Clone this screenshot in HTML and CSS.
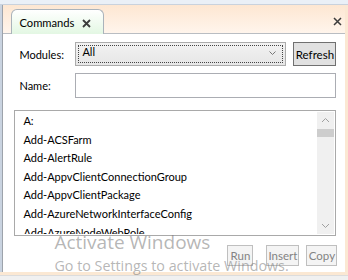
FILE: index.html
```html
<!DOCTYPE html>
<html>
<head>
<meta charset="utf-8">
<link rel="stylesheet" href="styles.css">
</head>
<body>
<div class="window">
  <div class="topband"></div>
  <div class="middle">
    <div class="rail"></div>
    <div class="pane">
      <div class="header">
        <div class="tab">
          <span class="tab-title">Commands</span>
          <svg class="tab-x" width="9" height="9" viewBox="0 0 9 9"><path d="M1 1L8 8M8 1L1 8" stroke="#3c3c3c" stroke-width="1.8"/></svg>
        </div>
        <svg class="pane-x" width="9" height="9" viewBox="0 0 9 9"><path d="M1 1L8 8M8 1L1 8" stroke="#3c3c3c" stroke-width="1.5"/></svg>
      </div>
      <div class="content">
        <div class="row">
          <label class="lbl">Modules:</label>
          <div class="combo">
            <div class="focus"><span>All</span>
              <svg class="chev" width="7" height="5" viewBox="0 0 7 5"><path d="M0.5 0.5L3.5 3.5L6.5 0.5" stroke="#777" fill="none" stroke-width="1"/></svg>
            </div>
          </div>
          <button class="btn refresh">Refresh</button>
        </div>
        <div class="row">
          <label class="lbl">Name:</label>
          <div class="textbox"></div>
        </div>
        <div class="list">
          <ul class="items">
            <li>A:</li>
            <li>Add-ACSFarm</li>
            <li>Add-AlertRule</li>
            <li>Add-AppvClientConnectionGroup</li>
            <li>Add-AppvClientPackage</li>
            <li>Add-AzureNetworkInterfaceConfig</li>
            <li>Add-AzureNodeWebRole</li>
          </ul>
          <div class="scroll">
            <svg class="arrow" width="17" height="17" viewBox="0 0 17 17"><path d="M5 10L8.5 6.5L12 10" stroke="#a0a0a0" fill="none"/></svg>
            <div class="track"><div class="thumb"></div></div>
            <svg class="arrow" width="17" height="17" viewBox="0 0 17 17"><path d="M5 7L8.5 10.5L12 7" stroke="#a0a0a0" fill="none"/></svg>
          </div>
        </div>
        <div class="actions">
          <button class="btn dis run">Run</button>
          <button class="btn dis insert">Insert</button>
          <button class="btn dis copy">Copy</button>
        </div>
        <div class="watermark">
          <div class="wm1">Activate Windows</div>
          <div class="wm2">Go to Settings to activate Windows.</div>
        </div>
      </div>
    </div>
    <div class="rstrip"></div>
  </div>
  <div class="bpeach"></div>
  <div class="bgray"></div>
</div>
</body>
</html>
```
FILE: styles.css
```css
* { box-sizing: border-box; }
html, body { margin: 0; padding: 0; }
body {
  width: 348px; height: 280px; overflow: hidden;
  font-family: Lato, "Open Sans", sans-serif;
  font-size: 11px; color: #000; background: #f0f0f0;
}
.window { width: 348px; height: 280px; display: flex; flex-direction: column; }
.topband { height: 5px; background: #eaf0f7; border-bottom: 1px solid #c9d2dd; }
.middle { display: flex; height: 267px; }
.rail { width: 4px; background: linear-gradient(to right, #c9d3e0 0, #c9d3e0 2px, #9da3ab 2px, #9da3ab 3px, #e6ebf1 3px); }
.rstrip { width: 3px; background: #fbe8d3; }
.pane { flex: 1; display: flex; flex-direction: column; background: #fff; }
.header {
  height: 29px; position: relative;
  background: linear-gradient(to bottom, #fde7d2, #fff5ec);
  border-bottom: 1px solid #b9bdc2;
  display: flex; align-items: flex-end; padding-left: 8px;
}
.tab {
  height: 25px; width: 93px; margin-bottom: -1px;
  border: 1px solid #aab3bb; border-bottom: none;
  border-radius: 6px 6px 0 0;
  background: linear-gradient(to bottom, #ffffff, #e3f7e3);
  display: flex; align-items: center; padding: 0 0 0 7px; gap: 8px;
}
.tab-title { font-size: 11.2px; line-height: 16px; margin-top: 1px; }
.tab-x { margin-top: 2px; }
.pane-x { position: absolute; right: 3px; top: 12px; }
.content { flex: 1; position: relative; padding: 8px 8px 0 11px; display: flex; flex-direction: column; }
.row { display: flex; align-items: center; height: 24px; margin-bottom: 7px; }
.lbl { width: 61px; padding-left: 5px; }
.combo {
  width: 211px; height: 24px;
  border: 1px solid #acacac;
  background: linear-gradient(to bottom, #f2f2f2, #e6e6e6);
  padding: 2px;
}
.focus {
  height: 100%; border: 1px dotted #444;
  display: flex; align-items: center; justify-content: space-between;
  padding: 0 6px 4px 3px;
}
.focus span { line-height: 14px; }
.chev { margin-top: 3px; }
.btn {
  font-family: Lato, "Open Sans", sans-serif;
  font-size: 11px; padding: 0; height: 24px;
  background: #e1e1e1; border: 1px solid #707070; color: #000;
}
.refresh { width: 43px; margin-left: 7px; font-size: 11.5px; }
.textbox { width: 261px; height: 25px; border: 1px solid #abadb3; background: #fff; }
.list {
  margin-top: 6px; width: 322px; height: 126px;
  border: 1px solid #a9a9a9; display: flex; padding: 1px;
}
.items { flex: 1; list-style: none; margin: 0; padding: 0 0 0 7px; overflow: hidden; }
.items li { height: 18.6px; line-height: 18.6px; white-space: nowrap; }
.scroll { width: 17px; display: flex; flex-direction: column; background: #f0f0f0; }
.track { flex: 1; }
.thumb { height: 8px; background: #cdcdcd; }
.arrow { flex: none; }
.actions { display: flex; margin-top: 9px; padding-left: 213px; }
.dis { height: 21px; background: #f4f4f4; border: 1px solid #bfbfbf; color: #838383; font-size: 11.5px; }
.run { width: 26px; }
.insert { width: 33px; margin-left: 13px; }
.copy { width: 31px; margin-left: 7px; }
.watermark { position: absolute; left: 51px; top: 196px; color: rgba(120,120,120,0.55); pointer-events: none; }
.wm1 { font-family: "Open Sans", sans-serif; font-size: 19px; line-height: 24px; }
.wm2 { font-family: "Open Sans", sans-serif; font-size: 14.3px; line-height: 20px; margin-top: 2px; }
.bpeach { height: 3px; background: #fbe8d3; }
.bgray { flex: 1; background: #f0f0f0; border-top: 1px solid #dcdcdc; }
```
